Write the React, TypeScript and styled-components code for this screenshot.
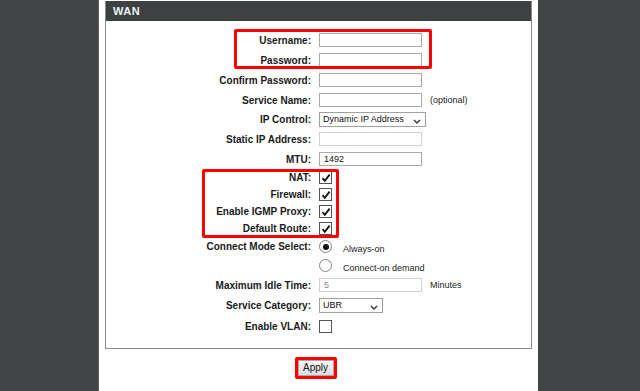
import React from 'react';
import styled, { createGlobalStyle } from 'styled-components';

const GlobalStyle = createGlobalStyle`
  html, body {
    margin: 0;
    padding: 0;
    background: #414546;
    font-family: "Liberation Sans", Arial, sans-serif;
  }
`;

const Page = styled.div`
  width: 640px;
  height: 391px;
  overflow: hidden;
  background: #414546;
`;

const Column = styled.div`
  position: relative;
  margin-left: 98px;
  width: 440px;
  height: 391px;
  box-sizing: border-box;
  padding: 1px 6px 0 6px;
  background: #fff;
  border-left: 1px solid #5a5e5f;
`;

const Panel = styled.div`
  border: 1px solid #8a8a8a;
  border-top: none;
  padding-bottom: 11px;
`;

const Header = styled.div`
  height: 20px;
  background: #3d4141;
  color: #eef2f6;
  font-size: 11px;
  font-weight: bold;
  line-height: 20px;
  padding-left: 7px;
  letter-spacing: 0.5px;
`;

const Body = styled.div`
  padding-top: 9px;
`;

const Row = styled.div<{ $h: number }>`
  display: grid;
  grid-template-columns: 205px 1fr;
  column-gap: 8px;
  align-items: center;
  height: ${({ $h }) => $h}px;
`;

const Label = styled.div`
  text-align: right;
  font-size: 10px;
  font-weight: bold;
  color: #1a1a1a;
`;

const Field = styled.div`
  display: flex;
  align-items: center;
  gap: 7px;
`;

const TextInput = styled.div<{ $disabled?: boolean }>`
  width: 97px;
  height: 12px;
  border: 1px solid ${({ $disabled }) => ($disabled ? '#d0d0d0' : '#a9a9a9')};
  background: #fff;
  font-size: 9px;
  line-height: 12px;
  padding-left: 4px;
  color: ${({ $disabled }) => ($disabled ? '#8a8a8a' : '#111')};
`;

const Note = styled.span`
  font-size: 9px;
  color: #222;
  margin-left: 1px;
`;

const SelectBox = styled.div<{ $w: number }>`
  position: relative;
  width: ${({ $w }) => $w}px;
  height: 13px;
  border: 1px solid #a0a0a0;
  box-sizing: content-box;
  font-size: 9px;
  line-height: 13px;
  padding-left: 3px;
  color: #111;
  svg {
    position: absolute;
    right: 4px;
    top: 6px;
  }
`;

const Check = styled.div`
  width: 11px;
  height: 11px;
  border: 1px solid #555;
  background: #fff;
  display: flex;
  align-items: center;
  justify-content: center;
`;

const Radio = styled.div<{ $on?: boolean }>`
  width: 11px;
  height: 11px;
  border: 1px solid #808080;
  border-radius: 50%;
  background: #fff;
  display: flex;
  align-items: center;
  justify-content: center;
  &::after {
    content: '';
    display: ${({ $on }) => ($on ? 'block' : 'none')};
    width: 6px;
    height: 6px;
    border-radius: 50%;
    background: #111;
  }
`;

const RadioText = styled.span`
  font-size: 9px;
  color: #222;
  margin-top: 4px;
  margin-left: 4px;
`;

const ButtonBar = styled.div`
  display: flex;
  justify-content: center;
  padding-right: 6px;
  margin-top: 8px;
`;

const Highlight = styled.div`
  border: 3px solid #f00;
  border-radius: 2px;
  display: flex;
`;

const Button = styled.div`
  width: 34px;
  height: 14px;
  border: 1px solid #a8a8a8;
  background: linear-gradient(#f6f6f6, #dcdcdc);
  font-size: 10px;
  line-height: 14px;
  text-align: center;
  color: #111;
`;

const Mark = styled.div<{ $l: number; $t: number; $w: number; $h: number }>`
  position: absolute;
  left: ${({ $l }) => $l}px;
  top: ${({ $t }) => $t}px;
  width: ${({ $w }) => $w}px;
  height: ${({ $h }) => $h}px;
  box-sizing: border-box;
  border: 3px solid #f00;
  border-radius: 2px;
  pointer-events: none;
`;

const Chevron = () => (
  <svg width="8" height="5" viewBox="0 0 8 5">
    <polyline points="1,1 4,4 7,1" fill="none" stroke="#333" strokeWidth="1.4" />
  </svg>
);

const Tick = () => (
  <svg width="10" height="10" viewBox="0 0 10 10">
    <path d="M1.5 5.2 L3.8 7.8 L8.6 1.6" fill="none" stroke="#111" strokeWidth="1.8" />
  </svg>
);

const CheckRow = ({ label, on }: { label: string; on: boolean }) => (
  <Row $h={17}>
    <Label>{label}</Label>
    <Field>
      <Check>{on && <Tick />}</Check>
    </Field>
  </Row>
);

export default function App() {
  return (
    <Page>
      <GlobalStyle />
      <Column>
        <Panel>
          <Header>WAN</Header>
          <Body>
            <Row $h={20}>
              <Label>Username:</Label>
              <Field><TextInput /></Field>
            </Row>
            <Row $h={20}>
              <Label>Password:</Label>
              <Field><TextInput /></Field>
            </Row>
            <Row $h={20}>
              <Label>Confirm Password:</Label>
              <Field><TextInput /></Field>
            </Row>
            <Row $h={20}>
              <Label>Service Name:</Label>
              <Field><TextInput /><Note>(optional)</Note></Field>
            </Row>
            <Row $h={19}>
              <Label>IP Control:</Label>
              <Field>
                <SelectBox $w={102}>Dynamic IP Address<Chevron /></SelectBox>
              </Field>
            </Row>
            <Row $h={20}>
              <Label>Static IP Address:</Label>
              <Field><TextInput $disabled /></Field>
            </Row>
            <Row $h={20}>
              <Label>MTU:</Label>
              <Field><TextInput>1492</TextInput></Field>
            </Row>
            <CheckRow label="NAT:" on />
            <CheckRow label="Firewall:" on />
            <CheckRow label="Enable IGMP Proxy:" on />
            <CheckRow label="Default Route:" on />
            <Row $h={19}>
              <Label>Connect Mode Select:</Label>
              <Field><Radio $on /><RadioText>Always-on</RadioText></Field>
            </Row>
            <Row $h={19}>
              <Label />
              <Field><Radio /><RadioText>Connect-on demand</RadioText></Field>
            </Row>
            <Row $h={20}>
              <Label>Maximum Idle Time:</Label>
              <Field><TextInput $disabled>5</TextInput><Note>Minutes</Note></Field>
            </Row>
            <Row $h={20}>
              <Label>Service Category:</Label>
              <Field>
                <SelectBox $w={59}>UBR<Chevron /></SelectBox>
              </Field>
            </Row>
            <Row $h={22}>
              <Label>Enable VLAN:</Label>
              <Field><Check /></Field>
            </Row>
          </Body>
        </Panel>
        <ButtonBar>
          <Highlight>
            <Button>Apply</Button>
          </Highlight>
        </ButtonBar>
        <Mark $l={135} $t={29} $w={198} $h={40} />
        <Mark $l={103} $t={169} $w={137} $h={69} />
      </Column>
    </Page>
  );
}
